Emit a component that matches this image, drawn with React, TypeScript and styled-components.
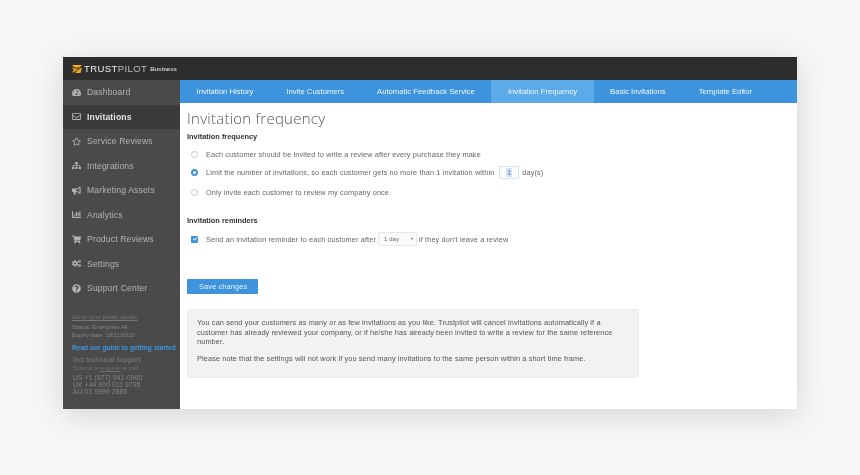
import styled, { createGlobalStyle } from 'styled-components';
import {
  FaBullhorn,
  FaChartBar,
  FaCheck,
  FaCogs,
  FaQuestionCircle,
  FaRegEnvelope,
  FaRegStar,
  FaShoppingCart,
  FaSitemap,
  FaTachometerAlt,
} from 'react-icons/fa';
import type { IconType } from 'react-icons';

const GlobalStyle = createGlobalStyle`
  html, body {
    margin: 0;
    background: #f6f6f6;
  }
  body {
    font-family: "Liberation Sans", Arial, sans-serif;
    color: #555;
  }
`;

const navItems: { label: string; icon: IconType; active?: boolean }[] = [
  { label: 'Dashboard', icon: FaTachometerAlt },
  { label: 'Invitations', icon: FaRegEnvelope, active: true },
  { label: 'Service Reviews', icon: FaRegStar },
  { label: 'Integrations', icon: FaSitemap },
  { label: 'Marketing Assets', icon: FaBullhorn },
  { label: 'Analytics', icon: FaChartBar },
  { label: 'Product Reviews', icon: FaShoppingCart },
  { label: 'Settings', icon: FaCogs },
  { label: 'Support Center', icon: FaQuestionCircle },
];

const tabs = [
  { label: 'Invitation History' },
  { label: 'Invite Customers' },
  { label: 'Automatic Feedback Service' },
  { label: 'Invitation Frequency', active: true },
  { label: 'Basic Invitations' },
  { label: 'Template Editor' },
];

const App = (): JSX.Element => (
  <>
    <GlobalStyle />
    <Stage>
      <Window>
        <TopBar>
          <svg width="10" height="8" viewBox="0 0 10 8" aria-hidden="true">
            <path d="M0 0h10L7.500 2.500H3L1.500 1.500z" fill="#f5b324" />
            <path d="M0 2l3 1.500h4L4 6 0 8l1.500-3z" fill="#e99a1c" />
            <path d="M4.500 6.500L8 3.500l2-1-1.500 5.500H3z" fill="#f2a922" />
          </svg>
          <Brand>
            <b>TRUST</b>PILOT
          </Brand>
          <BrandSub>Business</BrandSub>
        </TopBar>
        <Body>
          <Sidebar>
            <Nav>
              {navItems.map(({ label, icon: Icon, active }) => (
                <NavItem key={label} $active={active}>
                  <NavIcon>
                    <Icon />
                  </NavIcon>
                  {label}
                </NavItem>
              ))}
            </Nav>
            <SideInfo>
              <ProfileLink>Go to your public profile</ProfileLink>
              <SmallLine>Status: Enterprise All</SmallLine>
              <SmallLine>Expiry date: 18/11/2020</SmallLine>
              <GuideLink>Read our guide to getting started</GuideLink>
              <SupportTitle>Get technical support</SupportTitle>
              <SubmitLine>
                Submit a <u>request</u> or call:
              </SubmitLine>
              <Phones>
                <div>US +1 (877) 941-0960</div>
                <div>UK +44 800 011 9795</div>
                <div>AU 03 9999 2886</div>
              </Phones>
            </SideInfo>
          </Sidebar>
          <Main>
            <TabBar>
              {tabs.map((tab) => (
                <Tab key={tab.label} $active={tab.active}>
                  {tab.label}
                </Tab>
              ))}
            </TabBar>
            <Content>
              <Title>Invitation frequency</Title>
              <SectionLabel>Invitation frequency</SectionLabel>
              <OptionList>
                <Option>
                  <Radio />
                  Each customer should be invited to write a review after every purchase they make
                </Option>
                <Option $spaced>
                  <Radio $checked />
                  Limit the number of invitations, so each customer gets no more than 1 invitation within
                  <DayInput>
                    <mark>1</mark>
                  </DayInput>
                  day(s)
                </Option>
                <Option>
                  <Radio />
                  Only invite each customer to review my company once
                </Option>
              </OptionList>
              <ReminderLabel>Invitation reminders</ReminderLabel>
              <ReminderRow>
                <Checkbox>
                  <FaCheck />
                </Checkbox>
                Send an invitation reminder to each customer after
                <DaySelect>
                  1 day
                  <Caret />
                </DaySelect>
                if they don't leave a review
              </ReminderRow>
              <SaveButton>Save changes</SaveButton>
              <InfoBox>
                <p>
                  You can send your customers as many or as few invitations as you like. Trustpilot will cancel
                  invitations automatically if a customer has already reviewed your company, or if he/she has
                  already been invited to write a review for the same reference number.
                </p>
                <p>Please note that the settings will not work if you send many invitations to the same person within a short time frame.</p>
              </InfoBox>
            </Content>
          </Main>
        </Body>
      </Window>
    </Stage>
  </>
);

export default App;

const Stage = styled.div`
  box-sizing: border-box;
  width: 860px;
  height: 475px;
  padding: 57px 63px 66px;
  background: #f6f6f6;
  overflow: hidden;
`;

const Window = styled.div`
  display: flex;
  flex-direction: column;
  height: 352px;
  background: #fff;
  box-shadow: 0 6px 28px rgba(0, 0, 0, 0.13);
  filter: blur(0.45px);
`;

const TopBar = styled.div`
  display: flex;
  align-items: center;
  flex: 0 0 23px;
  padding-left: 9px;
  background: #2d2d2d;
`;

const Brand = styled.span`
  margin-left: 2px;
  font-size: 9.500px;
  letter-spacing: 0.4px;
  color: #bdbdbd;

  b {
    font-weight: 400;
    color: #f0f0f0;
  }
`;

const BrandSub = styled.span`
  margin-left: 3px;
  font-size: 6px;
  font-weight: 700;
  color: #cfcfcf;
`;

const Body = styled.div`
  display: flex;
  flex: 1;
  min-height: 0;
`;

const Sidebar = styled.aside`
  flex: 0 0 117px;
  background: #4a4a4a;
`;

const Nav = styled.nav`
  display: flex;
  flex-direction: column;
`;

const NavItem = styled.div<{ $active?: boolean }>`
  display: flex;
  align-items: center;
  height: 24.500px;
  padding-left: 8px;
  font-size: 8.600px;
  font-weight: ${(props) => (props.$active ? 700 : 400)};
  letter-spacing: 0.15px;
  color: ${(props) => (props.$active ? '#e4e4e4' : '#b4b4b4')};
  background: ${(props) => (props.$active ? '#3a3a3a' : 'transparent')};
`;

const NavIcon = styled.span`
  display: flex;
  justify-content: center;
  flex: 0 0 10px;
  margin-right: 6px;
  font-size: 9px;
  color: #b4b4b4;
`;

const SideInfo = styled.div`
  display: flex;
  flex-direction: column;
  padding: 11.500px 0 0 9px;
  color: #8a8a8a;
`;

const ProfileLink = styled.div`
  margin-bottom: 1.500px;
  font-size: 6.200px;
  line-height: 9px;
  text-decoration: underline;
  color: #777;
`;

const SmallLine = styled.div`
  font-size: 6px;
  line-height: 8.500px;
  color: #858585;
`;

const SubmitLine = styled(SmallLine)`
  margin-left: 1px;
  font-size: 6.200px;
  color: #6f6f6f;
`;

const GuideLink = styled.div`
  margin: 3px 0 3.500px;
  font-size: 6.600px;
  line-height: 9px;
  font-weight: 700;
  white-space: nowrap;
  color: #3d94dc;
`;

const SupportTitle = styled.div`
  margin-left: 1px;
  font-size: 6.600px;
  line-height: 9px;
  font-weight: 700;
  color: #707070;
`;

const Phones = styled.div`
  margin: 1px 0 0 1px;
  font-size: 6.600px;
  line-height: 7px;
  letter-spacing: 0.2px;
  color: #858585;
`;

const Main = styled.main`
  flex: 1;
  min-width: 0;
  display: flex;
  flex-direction: column;
`;

const TabBar = styled.div`
  display: flex;
  flex: 0 0 23px;
  background: #3d94dc;
`;

const Tab = styled.div<{ $active?: boolean }>`
  display: flex;
  align-items: center;
  padding: 0 16.500px;
  font-size: 7.700px;
  color: #eef6fd;
  white-space: nowrap;
  background: ${(props) => (props.$active ? '#5cabe8' : 'transparent')};
`;

const Content = styled.div`
  flex: 1;
  padding: 5px 7px 0;
  font-size: 7.300px;
  letter-spacing: 0.13px;
  color: #666;
`;

const Title = styled.h1`
  margin: 0;
  font-family: "Open Sans", sans-serif;
  font-size: 15px;
  line-height: 20px;
  font-weight: 300;
  letter-spacing: 0.25px;
  color: #555;
`;

const SectionLabel = styled.div`
  margin-top: 4px;
  font-size: 7.400px;
  line-height: 9px;
  font-weight: 700;
  letter-spacing: 0;
  color: #333;
`;

const ReminderLabel = styled(SectionLabel)`
  margin-top: 14.500px;
`;

const OptionList = styled.div`
  display: flex;
  flex-direction: column;
  margin-top: 4px;
`;

const Option = styled.div<{ $spaced?: boolean }>`
  display: flex;
  align-items: center;
  height: 18px;
  margin-bottom: ${(props) => (props.$spaced ? '2px' : '0')};
  padding-left: 4px;
  white-space: nowrap;
`;

const Radio = styled.span<{ $checked?: boolean }>`
  box-sizing: border-box;
  flex: 0 0 7px;
  height: 7px;
  margin-right: 8px;
  border-radius: 50%;
  border: ${(props) => (props.$checked ? '2px solid #3d94dc' : '0.7px solid #c4c4c4')};
  background: #fff;
`;

const DayInput = styled.span`
  box-sizing: border-box;
  display: flex;
  align-items: center;
  justify-content: center;
  width: 20px;
  height: 13px;
  margin: 0 3px 0 5px;
  border: 1px solid #cfe4f7;
  border-radius: 1px;
  color: #5a7fa7;

  mark {
    padding: 0 1px;
    color: inherit;
    background: #cfe2f7;
  }
`;

const ReminderRow = styled.div`
  display: flex;
  align-items: center;
  height: 15px;
  margin-top: 7px;
  padding-left: 4px;
  white-space: nowrap;
`;

const Checkbox = styled.span`
  box-sizing: border-box;
  display: flex;
  align-items: center;
  justify-content: center;
  flex: 0 0 7px;
  height: 7px;
  margin-right: 8px;
  font-size: 4px;
  color: #fff;
  border-radius: 1px;
  background: #3d94dc;
`;

const DaySelect = styled.span`
  box-sizing: border-box;
  display: flex;
  align-items: center;
  justify-content: space-between;
  width: 39px;
  height: 14px;
  margin: 0 2px;
  padding: 0 3px 0 5px;
  border: 1px solid #e8e8e8;
  border-radius: 1px;
  font-size: 6px;
  background: #fafafa;
`;

const Caret = styled.i`
  width: 0;
  height: 0;
  border-left: 1.500px solid transparent;
  border-right: 1.500px solid transparent;
  border-top: 2px solid #555;
`;

const SaveButton = styled.div`
  display: flex;
  align-items: center;
  width: 71px;
  height: 15px;
  margin-top: 32.500px;
  padding-left: 12px;
  box-sizing: border-box;
  font-size: 7.400px;
  color: #e8f3fc;
  border-radius: 1px;
  background: #3d94dc;
`;

const InfoBox = styled.div`
  box-sizing: border-box;
  width: 452px;
  height: 69px;
  margin-top: 15px;
  padding: 8px 15px 0 9px;
  font-size: 7.370px;
  line-height: 9.700px;
  letter-spacing: 0.1px;
  color: #555;
  border: 1px solid #ebebeb;
  border-radius: 2px;
  background: #f2f2f2;

  p {
    margin: 0 0 7px;
  }
`;
